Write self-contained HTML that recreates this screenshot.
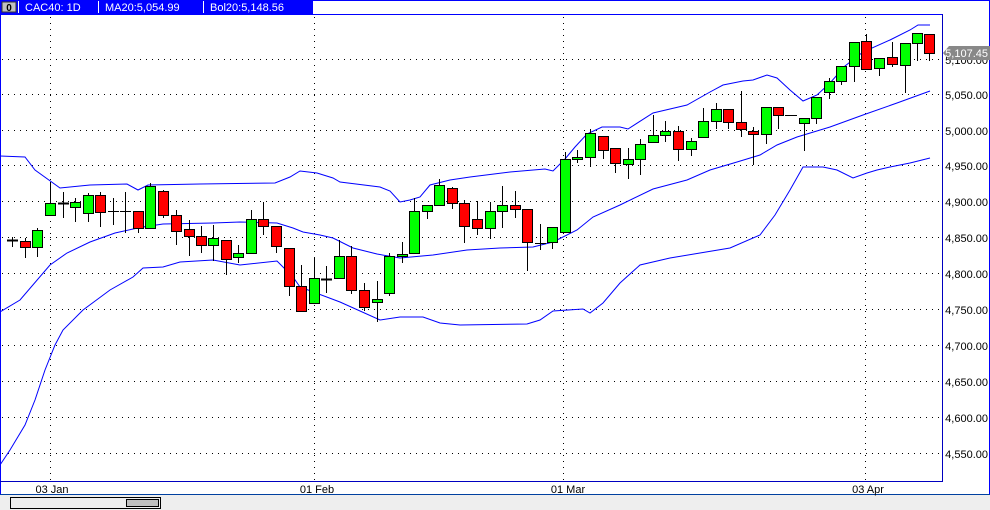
<!DOCTYPE html>
<html><head><meta charset="utf-8"><style>
html,body{margin:0;padding:0;background:#fff;}
svg{display:block;font-family:"Liberation Sans",sans-serif;}
</style></head><body>
<svg width="990" height="510" viewBox="0 0 990 510" xmlns="http://www.w3.org/2000/svg">
<rect x="0" y="0" width="990" height="510" fill="#fff"/>
<rect x="0" y="495" width="990" height="15" fill="#eeeeee"/>
<!-- outer border -->
<line x1="0" y1="0.5" x2="990" y2="0.5" stroke="#0000ff"/>
<line x1="0.5" y1="0" x2="0.5" y2="495" stroke="#0000ff"/>
<line x1="989.5" y1="0" x2="989.5" y2="495" stroke="#0000ff"/>
<line x1="0" y1="494.5" x2="990" y2="494.5" stroke="#0040a0"/>
<!-- plot frame -->
<line x1="0" y1="14.5" x2="942" y2="14.5" stroke="#0000ff"/>
<line x1="942.5" y1="14" x2="942.5" y2="482" stroke="#0000c0"/>
<line x1="0" y1="481.5" x2="943" y2="481.5" stroke="#0000c0"/>
<!-- header -->
<rect x="0" y="0" width="313" height="14" fill="#0000ff"/>
<rect x="2" y="2" width="14" height="10" fill="#c0c0c0" stroke="#333" stroke-width="1"/>
<text x="9" y="11" font-size="10" font-weight="bold" text-anchor="middle" fill="#000">0</text>
<line x1="18.5" y1="1" x2="18.5" y2="13" stroke="#fff"/>
<text x="25" y="11" font-size="11" fill="#fff">CAC40: 1D</text>
<line x1="98.5" y1="1" x2="98.5" y2="13" stroke="#fff"/>
<text x="105" y="11" font-size="11" fill="#fff">MA20:5,054.99</text>
<line x1="203.5" y1="1" x2="203.5" y2="13" stroke="#fff"/>
<text x="210" y="11" font-size="11" fill="#fff">Bol20:5,148.56</text>
<!-- grid -->
<g stroke="#000" stroke-width="1" stroke-dasharray="1,5">
<line x1="2" y1="59.5" x2="942" y2="59.5"/>
<line x1="2" y1="94.5" x2="942" y2="94.5"/>
<line x1="2" y1="130.5" x2="942" y2="130.5"/>
<line x1="2" y1="165.5" x2="942" y2="165.5"/>
<line x1="2" y1="201.5" x2="942" y2="201.5"/>
<line x1="2" y1="237.5" x2="942" y2="237.5"/>
<line x1="2" y1="273.5" x2="942" y2="273.5"/>
<line x1="2" y1="309.5" x2="942" y2="309.5"/>
<line x1="2" y1="345.5" x2="942" y2="345.5"/>
<line x1="2" y1="381.5" x2="942" y2="381.5"/>
<line x1="2" y1="417.5" x2="942" y2="417.5"/>
<line x1="2" y1="453.5" x2="942" y2="453.5"/>
<line x1="50.5" y1="17" x2="50.5" y2="481"/>
<line x1="314.5" y1="17" x2="314.5" y2="481"/>
<line x1="563.5" y1="17" x2="563.5" y2="481"/>
<line x1="865.5" y1="17" x2="865.5" y2="481"/>
</g>
<!-- y labels -->
<g font-size="11" fill="#000" text-anchor="end">
<text x="988" y="99">5,050.00</text>
<text x="988" y="135">5,000.00</text>
<text x="988" y="170">4,950.00</text>
<text x="988" y="206">4,900.00</text>
<text x="988" y="242">4,850.00</text>
<text x="988" y="278">4,800.00</text>
<text x="988" y="314">4,750.00</text>
<text x="988" y="350">4,700.00</text>
<text x="988" y="386">4,650.00</text>
<text x="988" y="422">4,600.00</text>
<text x="988" y="458">4,550.00</text>
<text x="988" y="64">5,100.00</text>
</g>
<path d="M943 53 L949 46 L990 46 L990 60 L949 60 Z" fill="#888"/>
<text x="988" y="57" font-size="11" fill="#fff" text-anchor="end">5,107.45</text>
<!-- x labels -->
<g font-size="11" fill="#000" text-anchor="middle">
<text x="52" y="493">03 Jan</text>
<text x="317" y="493">01 Feb</text>
<text x="568" y="493">01 Mar</text>
<text x="868" y="493">03 Apr</text>
</g>
<!-- scrollbar -->
<rect x="10.5" y="497.5" width="150" height="11" fill="#eeeeee" stroke="#000"/>
<rect x="126.5" y="499.5" width="32" height="7" fill="#c0c0c0" stroke="#000"/>
<!-- bands -->
<g fill="none" stroke="#0000ff" stroke-width="1">
<polyline points="0,156 25,157 35,170 60,188 90,185 127,184 138,190 148,185 200,184 275,183 290,177 300,171 317,173 333,178 340,182 380,187 390,191 400,202 410,200 420,197 430,185 450,180 470,177 510,172 545,169 553,171 565,159 575,147 587,134 602,127 620,127 628,129 653,113 670,109 687,105 710,92 723,85 743,81 753,80 767,75 777,78 790,90 803,101 817,95 830,83 845,66 863,52 890,40 910,30 918,25 930,25"/>
<polyline points="0,312 20,300 50,265 67,253 90,242 115,233 133,229 143,227 163,224 213,223 240,222 277,223 293,228 303,232 320,235 333,238 353,248 377,254 400,258 433,255 467,250 500,248 533,247 553,242 577,230 593,217 620,205 653,189 687,180 710,170 737,162 760,155 777,145 797,137 830,127 863,115 897,103 930,91"/>
<polyline points="0,465 10,450 25,425 35,400 45,370 55,345 63,330 83,310 110,290 133,277 143,268 163,267 180,262 213,260 240,265 277,261 293,277 300,287 340,302 380,320 400,317 423,317 440,323 460,325 527,324 540,320 553,311 583,309 590,313 603,303 620,283 640,265 670,258 700,253 730,248 760,235 775,215 790,190 803,167 823,167 837,170 853,178 867,173 877,170 890,167 910,163 930,158"/>
</g>
<!-- candles -->
<g stroke="#000" stroke-width="1">
<line x1="12.5" y1="237" x2="12.5" y2="247"/><line x1="7" y1="240.5" x2="18" y2="240.5" stroke-width="2"/>
<line x1="25.5" y1="238" x2="25.5" y2="258"/><rect x="20.5" y="241.5" width="10" height="6" fill="#f00"/>
<line x1="37.5" y1="228" x2="37.5" y2="257"/><rect x="32.5" y="230.5" width="10" height="17" fill="#0f0"/>
<line x1="50.5" y1="182" x2="50.5" y2="215"/><rect x="45.5" y="203.5" width="10" height="12" fill="#0f0"/>
<line x1="63.5" y1="192" x2="63.5" y2="218"/><line x1="58" y1="203.5" x2="69" y2="203.5" stroke-width="2"/>
<line x1="75.5" y1="198" x2="75.5" y2="222"/><rect x="70.5" y="202.5" width="10" height="5" fill="#0f0"/>
<line x1="88.5" y1="193" x2="88.5" y2="222"/><rect x="83.5" y="195.5" width="10" height="18" fill="#0f0"/>
<line x1="100.5" y1="192" x2="100.5" y2="227"/><rect x="95.5" y="195.5" width="10" height="17" fill="#f00"/>
<line x1="113.5" y1="198" x2="113.5" y2="225"/><line x1="108" y1="211.5" x2="119" y2="211.5"/>
<line x1="125.5" y1="192" x2="125.5" y2="233"/><line x1="120" y1="211.5" x2="131" y2="211.5"/>
<line x1="138.5" y1="211" x2="138.5" y2="233"/><rect x="133.5" y="211.5" width="10" height="17" fill="#f00"/>
<line x1="150.5" y1="183" x2="150.5" y2="228"/><rect x="145.5" y="186.5" width="10" height="42" fill="#0f0"/>
<line x1="163.5" y1="190" x2="163.5" y2="218"/><rect x="158.5" y="191.5" width="10" height="24" fill="#f00"/>
<line x1="176.5" y1="210" x2="176.5" y2="245"/><rect x="171.5" y="215.5" width="10" height="16" fill="#f00"/>
<line x1="189.5" y1="220" x2="189.5" y2="256"/><rect x="184.5" y="229.5" width="10" height="7" fill="#f00"/>
<line x1="201.5" y1="226" x2="201.5" y2="253"/><rect x="196.5" y="236.5" width="10" height="9" fill="#f00"/>
<line x1="213.5" y1="225" x2="213.5" y2="261"/><rect x="208.5" y="238.5" width="10" height="7" fill="#0f0"/>
<line x1="226.5" y1="240" x2="226.5" y2="275"/><rect x="221.5" y="240.5" width="10" height="19" fill="#f00"/>
<line x1="238.5" y1="245" x2="238.5" y2="263"/><rect x="233.5" y="253.5" width="10" height="4" fill="#0f0"/>
<line x1="251.5" y1="210" x2="251.5" y2="253"/><rect x="246.5" y="219.5" width="10" height="34" fill="#0f0"/>
<line x1="263.5" y1="202" x2="263.5" y2="235"/><rect x="258.5" y="219.5" width="10" height="7" fill="#f00"/>
<line x1="276.5" y1="226" x2="276.5" y2="253"/><rect x="271.5" y="226.5" width="10" height="20" fill="#f00"/>
<line x1="289.5" y1="248" x2="289.5" y2="296"/><rect x="284.5" y="248.5" width="10" height="38" fill="#f00"/>
<line x1="301.5" y1="265" x2="301.5" y2="311"/><rect x="296.5" y="286.5" width="10" height="25" fill="#f00"/>
<line x1="314.5" y1="257" x2="314.5" y2="303"/><rect x="309.5" y="278.5" width="10" height="25" fill="#0f0"/>
<line x1="326.5" y1="266" x2="326.5" y2="293"/><line x1="321" y1="279.5" x2="332" y2="279.5" stroke-width="2"/>
<line x1="339.5" y1="240" x2="339.5" y2="278"/><rect x="334.5" y="256.5" width="10" height="22" fill="#0f0"/>
<line x1="351.5" y1="246" x2="351.5" y2="294"/><rect x="346.5" y="256.5" width="10" height="34" fill="#f00"/>
<line x1="364.5" y1="283" x2="364.5" y2="311"/><rect x="359.5" y="290.5" width="10" height="17" fill="#f00"/>
<line x1="377.5" y1="281" x2="377.5" y2="322"/><rect x="372.5" y="299.5" width="10" height="3" fill="#0f0"/>
<line x1="389.5" y1="253" x2="389.5" y2="296"/><rect x="384.5" y="256.5" width="10" height="37" fill="#0f0"/>
<line x1="402.5" y1="242" x2="402.5" y2="263"/><rect x="397.5" y="254.5" width="10" height="2" fill="#0f0"/>
<line x1="414.5" y1="198" x2="414.5" y2="253"/><rect x="409.5" y="211.5" width="10" height="42" fill="#0f0"/>
<line x1="427.5" y1="205" x2="427.5" y2="219"/><rect x="422.5" y="205.5" width="10" height="6" fill="#0f0"/>
<line x1="439.5" y1="179" x2="439.5" y2="205"/><rect x="434.5" y="185.5" width="10" height="20" fill="#0f0"/>
<line x1="452.5" y1="187" x2="452.5" y2="209"/><rect x="447.5" y="188.5" width="10" height="15" fill="#f00"/>
<line x1="464.5" y1="200" x2="464.5" y2="243"/><rect x="459.5" y="203.5" width="10" height="23" fill="#f00"/>
<line x1="477.5" y1="201" x2="477.5" y2="235"/><rect x="472.5" y="219.5" width="10" height="9" fill="#f00"/>
<line x1="490.5" y1="202" x2="490.5" y2="239"/><rect x="485.5" y="211.5" width="10" height="17" fill="#0f0"/>
<line x1="502.5" y1="186" x2="502.5" y2="228"/><rect x="497.5" y="205.5" width="10" height="6" fill="#0f0"/>
<line x1="515.5" y1="191" x2="515.5" y2="218"/><rect x="510.5" y="205.5" width="10" height="4" fill="#f00"/>
<line x1="527.5" y1="209" x2="527.5" y2="271"/><rect x="522.5" y="209.5" width="10" height="33" fill="#f00"/>
<line x1="540.5" y1="224" x2="540.5" y2="250"/><line x1="535" y1="243.5" x2="546" y2="243.5"/>
<line x1="552.5" y1="227" x2="552.5" y2="249"/><rect x="547.5" y="227.5" width="10" height="15" fill="#0f0"/>
<line x1="565.5" y1="152" x2="565.5" y2="232"/><rect x="560.5" y="159.5" width="10" height="73" fill="#0f0"/>
<line x1="577.5" y1="150" x2="577.5" y2="163"/><rect x="572.5" y="157.5" width="10" height="2" fill="#0f0"/>
<line x1="590.5" y1="129" x2="590.5" y2="167"/><rect x="585.5" y="133.5" width="10" height="24" fill="#0f0"/>
<line x1="603.5" y1="136" x2="603.5" y2="159"/><rect x="598.5" y="136.5" width="10" height="14" fill="#f00"/>
<line x1="615.5" y1="148" x2="615.5" y2="173"/><rect x="610.5" y="148.5" width="10" height="15" fill="#f00"/>
<line x1="628.5" y1="148" x2="628.5" y2="179"/><rect x="623.5" y="159.5" width="10" height="5" fill="#0f0"/>
<line x1="640.5" y1="139" x2="640.5" y2="175"/><rect x="635.5" y="144.5" width="10" height="15" fill="#0f0"/>
<line x1="653.5" y1="115" x2="653.5" y2="142"/><rect x="648.5" y="135.5" width="10" height="7" fill="#0f0"/>
<line x1="665.5" y1="121" x2="665.5" y2="142"/><rect x="660.5" y="131.5" width="10" height="4" fill="#0f0"/>
<line x1="678.5" y1="126" x2="678.5" y2="161"/><rect x="673.5" y="131.5" width="10" height="18" fill="#f00"/>
<line x1="691.5" y1="138" x2="691.5" y2="156"/><rect x="686.5" y="141.5" width="10" height="8" fill="#0f0"/>
<line x1="703.5" y1="108" x2="703.5" y2="137"/><rect x="698.5" y="121.5" width="10" height="16" fill="#0f0"/>
<line x1="716.5" y1="103" x2="716.5" y2="129"/><rect x="711.5" y="109.5" width="10" height="12" fill="#0f0"/>
<line x1="728.5" y1="109" x2="728.5" y2="129"/><rect x="723.5" y="109.5" width="10" height="13" fill="#f00"/>
<line x1="741.5" y1="91" x2="741.5" y2="137"/><rect x="736.5" y="122.5" width="10" height="7" fill="#f00"/>
<line x1="753.5" y1="127" x2="753.5" y2="165"/><rect x="748.5" y="131.5" width="10" height="3" fill="#f00"/>
<line x1="766.5" y1="107" x2="766.5" y2="144"/><rect x="761.5" y="107.5" width="10" height="27" fill="#0f0"/>
<line x1="778.5" y1="107" x2="778.5" y2="129"/><rect x="773.5" y="107.5" width="10" height="8" fill="#f00"/>
<line x1="785" y1="115.5" x2="797" y2="115.5"/>
<line x1="804.5" y1="118" x2="804.5" y2="151"/><rect x="799.5" y="118.5" width="10" height="5" fill="#0f0"/>
<line x1="816.5" y1="97" x2="816.5" y2="124"/><rect x="811.5" y="97.5" width="10" height="21" fill="#0f0"/>
<line x1="829.5" y1="78" x2="829.5" y2="99"/><rect x="824.5" y="81.5" width="10" height="11" fill="#0f0"/>
<line x1="841.5" y1="66" x2="841.5" y2="85"/><rect x="836.5" y="66.5" width="10" height="15" fill="#0f0"/>
<line x1="854.5" y1="42" x2="854.5" y2="82"/><rect x="849.5" y="42.5" width="10" height="24" fill="#0f0"/>
<line x1="866.5" y1="34" x2="866.5" y2="69"/><rect x="861.5" y="41.5" width="10" height="28" fill="#f00"/>
<line x1="879.5" y1="58" x2="879.5" y2="76"/><rect x="874.5" y="58.5" width="10" height="10" fill="#0f0"/>
<line x1="892.5" y1="42" x2="892.5" y2="67"/><rect x="887.5" y="57.5" width="10" height="7" fill="#f00"/>
<line x1="905.5" y1="43" x2="905.5" y2="93"/><rect x="900.5" y="43.5" width="10" height="22" fill="#0f0"/>
<line x1="917.5" y1="33" x2="917.5" y2="61"/><rect x="912.5" y="33.5" width="10" height="10" fill="#0f0"/>
<line x1="929.5" y1="34" x2="929.5" y2="61"/><rect x="924.5" y="34.5" width="10" height="19" fill="#f00"/>
</g>
</svg>
</body></html>
